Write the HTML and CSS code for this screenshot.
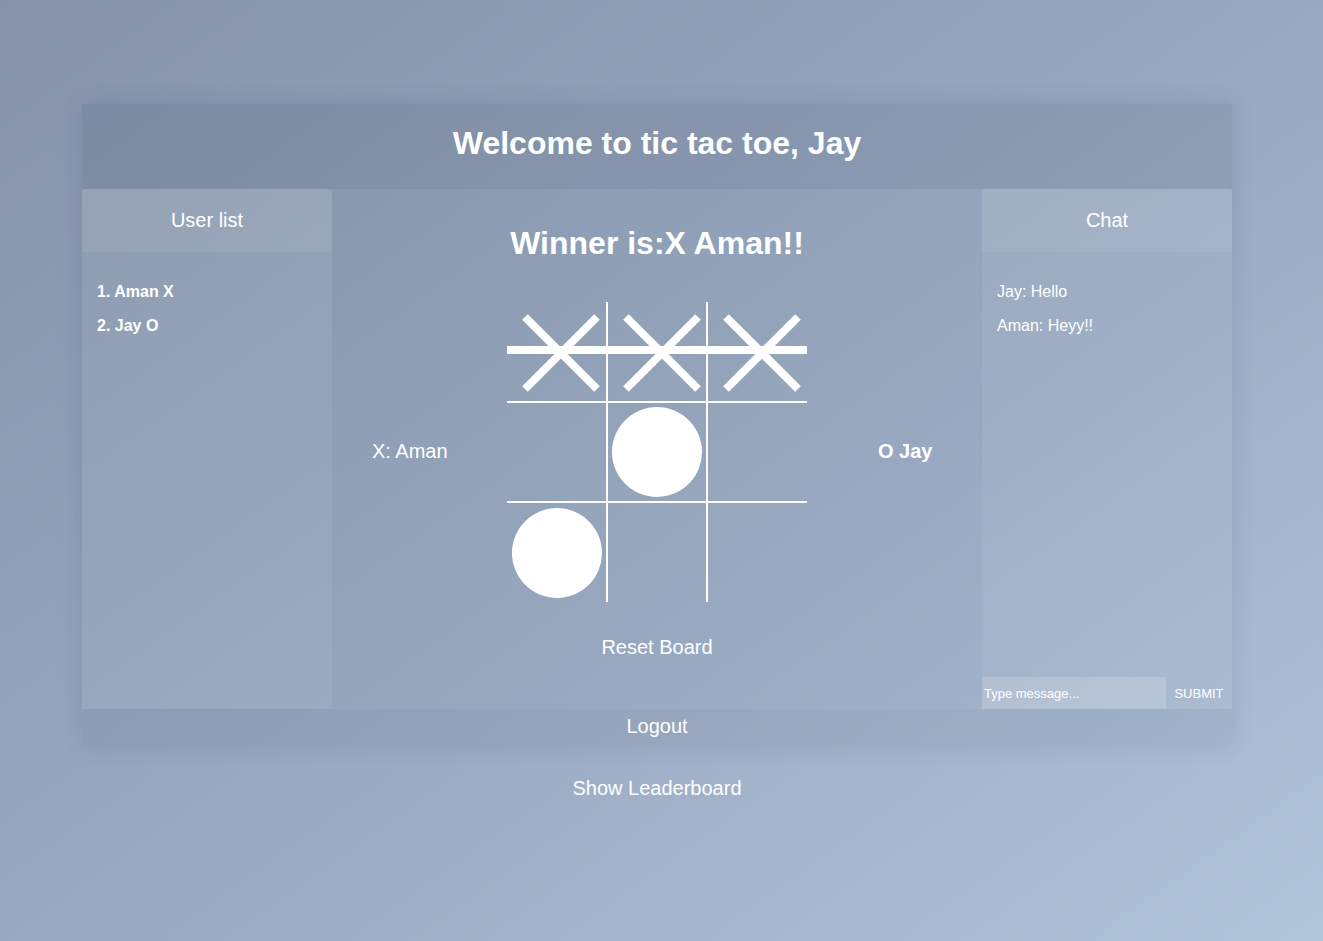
FILE: index.html
```html
<!DOCTYPE html>
<html>
<head>
<meta charset="utf-8">
<link rel="stylesheet" href="styles.css">
</head>
<body>
<div class="page">
  <div class="card">
    <header class="card-head"><h1>Welcome to tic tac toe, Jay</h1></header>
    <div class="main">
      <aside class="panel">
        <div class="panel-head">User list</div>
        <ul class="users">
          <li>1. Aman X</li>
          <li>2. Jay O</li>
        </ul>
      </aside>
      <section class="game">
        <h2 class="winner">Winner is:X Aman!!</h2>
        <div class="play">
          <div class="player p-x">X: Aman</div>
          <div class="board">
            <div class="cell xc"><svg class="x" viewBox="0 0 100 100"><line x1="14" y1="14" x2="86" y2="86"/><line x1="86" y1="14" x2="14" y2="86"/></svg></div>
            <div class="cell xc"><svg class="x" viewBox="0 0 100 100"><line x1="14" y1="14" x2="86" y2="86"/><line x1="86" y1="14" x2="14" y2="86"/></svg></div>
            <div class="cell xc"><svg class="x" viewBox="0 0 100 100"><line x1="14" y1="14" x2="86" y2="86"/><line x1="86" y1="14" x2="14" y2="86"/></svg></div>
            <div class="cell"></div>
            <div class="cell oc"><span class="o"></span></div>
            <div class="cell"></div>
            <div class="cell oc oc-first"><span class="o"></span></div>
            <div class="cell"></div>
            <div class="cell"></div>
            <div class="strike"></div>
          </div>
          <div class="player p-o">O Jay</div>
        </div>
        <div class="reset">Reset Board</div>
      </section>
      <aside class="panel chat">
        <div class="panel-head">Chat</div>
        <div class="messages">
          <p>Jay: Hello</p>
          <p>Aman: Heyy!!</p>
        </div>
        <form class="chat-form">
          <input class="chat-input" type="text" placeholder="Type message...">
          <button class="chat-btn" type="button">SUBMIT</button>
        </form>
      </aside>
    </div>
    <div class="card-foot">Logout</div>
  </div>
  <div class="leader">Show Leaderboard</div>
</div>
</body>
</html>
```
FILE: styles.css
```css
* { box-sizing: border-box; }
html, body { margin: 0; padding: 0; }
body {
  font-family: "Liberation Sans", Arial, sans-serif;
  color: #fff;
  min-height: 941px;
  background: linear-gradient(to bottom right, #8592aa 0%, #9aaac2 55%, #b0c4da 100%);
}
.page {
  padding-top: 104px;
  padding-left: 82px;
  height: 941px;
}
.card {
  width: 1150px;
  background: rgba(20, 30, 60, 0.025);
  box-shadow: 0 0 22px rgba(40, 50, 80, 0.12);
}
.card-head {
  height: 85px;
  display: flex;
  align-items: center;
  justify-content: center;
  background: rgba(30, 40, 70, 0.07);
}
.card-head h1 {
  margin: 0 0 7px 0;
  font-size: 32px;
  font-weight: bold;
}
.main {
  display: flex;
  height: 520px;
}
.panel {
  width: 250px;
  background: rgba(255, 255, 255, 0.07);
  border-radius: 3px 3px 0 0;
  display: flex;
  flex-direction: column;
}
.panel-head {
  height: 63px;
  display: flex;
  align-items: center;
  justify-content: center;
  font-size: 20px;
  background: rgba(255, 255, 255, 0.07);
  border-radius: 3px 3px 0 0;
}
.users {
  list-style: none;
  margin: 0;
  padding: 30px 15px 0;
  font-size: 16px;
  font-weight: bold;
}
.users li { line-height: 20px; margin-bottom: 14px; }
.game {
  width: 650px;
  display: flex;
  flex-direction: column;
  align-items: center;
}
.winner {
  margin: 0;
  padding-top: 35px;
  font-size: 32px;
  line-height: 38px;
  font-weight: bold;
}
.play {
  margin-top: 40px;
  width: 650px;
  display: grid;
  grid-template-columns: 175px 300px 175px;
  align-items: center;
}
.player { font-size: 20px; padding-bottom: 2px; }
.p-x { padding-left: 40px; }
.p-o { padding-left: 71px; font-weight: bold; }
.board {
  position: relative;
  display: grid;
  grid-template-columns: 101px 100px 99px;
  grid-template-rows: 101px 100px 99px;
}
.cell {
  display: flex;
  align-items: center;
  justify-content: center;
  border-right: 2px solid #fff;
  border-bottom: 2px solid #fff;
}
.cell:nth-child(3n) { border-right: none; }
.cell:nth-child(n+7) { border-bottom: none; }
.xc { padding-left: 9px; }
.oc-first { padding-left: 1px; }
.x { flex: none; width: 100px; height: 100px; margin-bottom: -3px; }
.x line { stroke: #fff; stroke-width: 8; }
.o {
  flex: none;
  width: 90px;
  height: 90px;
  border-radius: 50%;
  background: #fff;
}
.strike {
  position: absolute;
  left: 0;
  top: 44px;
  width: 300px;
  height: 8px;
  background: #fff;
}
.reset {
  margin-top: 33px;
  font-size: 20px;
  line-height: 24px;
}
.messages {
  flex: 1;
  padding: 30px 15px 0;
  font-size: 16px;
}
.messages p { margin: 0 0 14px; line-height: 20px; }
.chat-form {
  display: flex;
  height: 32px;
}
.chat-input {
  width: 184px;
  height: 32px;
  border: none;
  outline: none;
  margin: 0;
  padding: 0 2px;
  background: rgba(255, 255, 255, 0.15);
  color: #fff;
  font-family: "Liberation Sans", Arial, sans-serif;
  font-size: 13px;
}
.chat-input::placeholder { color: #fff; opacity: 1; }
.chat-btn {
  width: 66px;
  height: 32px;
  border: none;
  background: transparent;
  color: #fff;
  font-family: "Liberation Sans", Arial, sans-serif;
  font-size: 13px;
  padding: 0;
}
.card-foot {
  height: 36px;
  display: flex;
  align-items: center;
  justify-content: center;
  font-size: 20px;
  padding-bottom: 2px;
  background: rgba(30, 40, 70, 0.03);
}
.leader {
  width: 1150px;
  text-align: center;
  margin-top: 31px;
  font-size: 20px;
  line-height: 24px;
}
```
